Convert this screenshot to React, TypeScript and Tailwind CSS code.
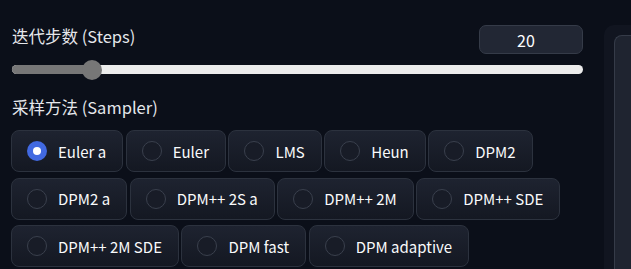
import { useState } from "react";

const SAMPLERS = [
  "Euler a",
  "Euler",
  "LMS",
  "Heun",
  "DPM2",
  "DPM2 a",
  "DPM++ 2S a",
  "DPM++ 2M",
  "DPM++ SDE",
  "DPM++ 2M SDE",
  "DPM fast",
  "DPM adaptive",
];

const FONT = {
  fontFamily: '"Noto Sans CJK SC", "Noto Sans", sans-serif',
};

export default function App() {
  const [sampler, setSampler] = useState("Euler a");
  const steps = 20;
  const pct = 14;

  return (
    <div
      className="flex h-[269px] w-full overflow-hidden bg-[#0b0f19] text-[16.5px] text-gray-100"
      style={FONT}
    >
      {/* Left column */}
      <div className="w-[583px] shrink-0 pl-[11px] pt-[25px]">
        {/* Steps */}
        <div className="flex h-[29px] items-start justify-between">
          <span className="pl-[1px] leading-[22px] text-gray-200">
            迭代步数 (Steps)
          </span>
          <div className="flex h-[29px] w-[104px] items-center justify-center rounded-[7px] border border-[#353b48] bg-[#222734] pr-[10px] text-[16px] text-white">
            {steps}
          </div>
        </div>

        {/* Slider */}
        <div className="relative mt-[6px] h-[20px]">
          <div className="absolute left-[1px] right-0 top-[5px] h-[9px] rounded-full bg-[#ececec]" />
          <div
            className="absolute left-[1px] top-[5px] h-[9px] rounded-l-full bg-[#777777]"
            style={{ width: `${pct}%` }}
          />
          <div className="absolute left-[71px] top-0 h-[20px] w-[20px] rounded-full bg-[#777777]" />
        </div>

        {/* Sampler */}
        <div className="mt-[16px] pl-[1px] leading-[22px] text-gray-200">
          采样方法 (Sampler)
        </div>
        <div className="mt-[12px] flex flex-wrap gap-x-[2.5px] gap-y-[5.5px]">
          {SAMPLERS.map((name) => {
            const active = sampler === name;
            return (
              <button
                key={name}
                onClick={() => setSampler(name)}
                className="flex h-[42px] items-center gap-[11px] rounded-[8px] border border-[#2c323e] bg-gradient-to-b from-[#1e2330] to-[#141822] pl-[15px] pr-[16px] text-[15px] text-gray-50"
              >
                {active ? (
                  <span className="flex h-[20px] w-[20px] shrink-0 items-center justify-center rounded-full bg-[#4169e1]">
                    <span className="h-[8px] w-[8px] rounded-full bg-white" />
                  </span>
                ) : (
                  <span className="h-[20px] w-[20px] shrink-0 rounded-full border border-[#3a404d] bg-[#181c27]" />
                )}
                <span className="whitespace-nowrap leading-none">{name}</span>
              </button>
            );
          })}
        </div>
      </div>

      {/* Right panel */}
      <div className="ml-[21px] mt-[25px] flex flex-1 rounded-tl-[10px] bg-[#111520] pl-[10px] pt-[10px]">
        <div className="flex-1 rounded-tl-[8px] border-l border-t border-[#353b48] bg-[#1f2430]" />
      </div>
    </div>
  );
}
